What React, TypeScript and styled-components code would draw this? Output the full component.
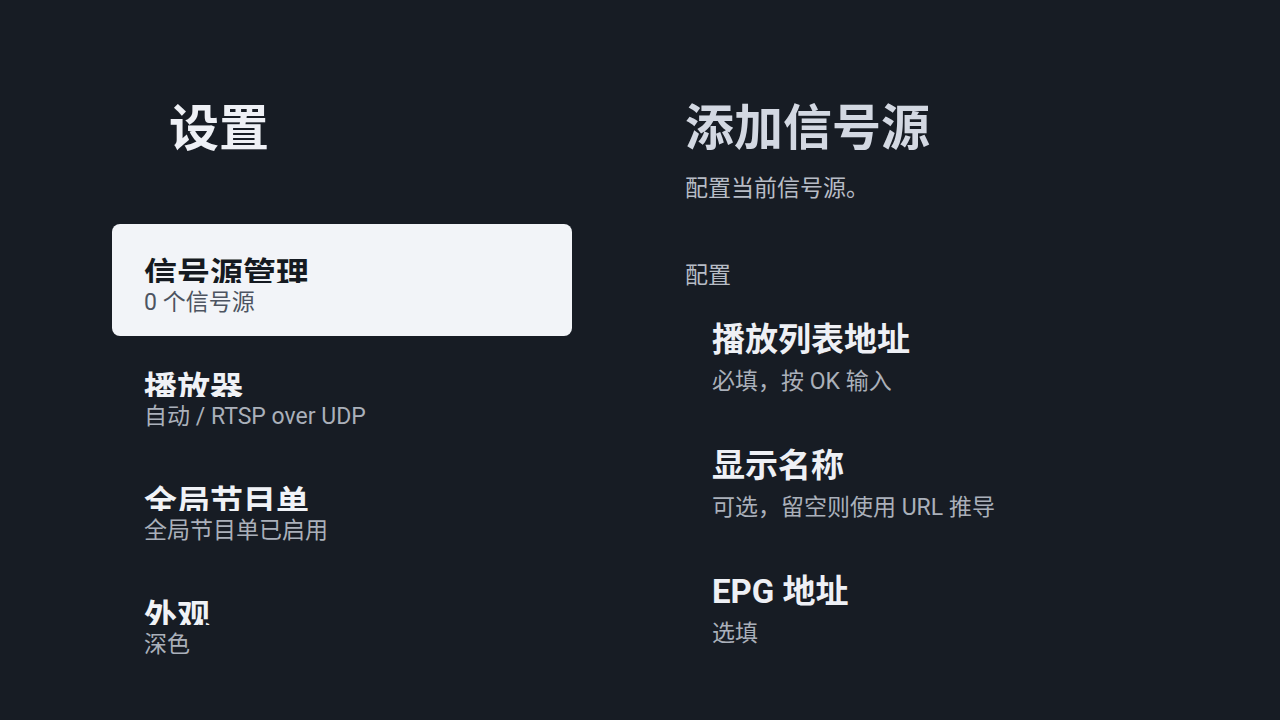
import { createGlobalStyle, styled } from "styled-components";

const GlobalStyle = createGlobalStyle`
  html, body {
    margin: 0;
    padding: 0;
    background: #171c24;
  }
  body {
    font-family: Roboto, "Noto Sans CJK SC", sans-serif;
    width: 1280px;
    height: 720px;
    overflow: hidden;
  }
`;

type Item = { title: string; subtitle: string };

const menu: Item[] = [
  { title: "信号源管理", subtitle: "0 个信号源" },
  { title: "播放器", subtitle: "自动 / RTSP over UDP" },
  { title: "全局节目单", subtitle: "全局节目单已启用" },
  { title: "外观", subtitle: "深色" },
];

const fields: Item[] = [
  { title: "播放列表地址", subtitle: "必填，按 OK 输入" },
  { title: "显示名称", subtitle: "可选，留空则使用 URL 推导" },
  { title: "EPG 地址", subtitle: "选填" },
];

export default function App() {
  return (
    <>
      <GlobalStyle />
      <Page>
        <Sidebar>
          <PageTitle $indent>设置</PageTitle>
          <Menu>
            {menu.map((item, i) => (
              <MenuItem key={item.title} $focused={i === 0}>
                <MenuTitle>{item.title}</MenuTitle>
                <MenuSub $focused={i === 0}>{item.subtitle}</MenuSub>
              </MenuItem>
            ))}
          </Menu>
        </Sidebar>
        <Detail>
          <PageTitle $dim>添加信号源</PageTitle>
          <Lead>配置当前信号源。</Lead>
          <Section>配置</Section>
          <Fields>
            {fields.map((f) => (
              <Field key={f.title}>
                <FieldTitle>{f.title}</FieldTitle>
                <FieldSub>{f.subtitle}</FieldSub>
              </Field>
            ))}
          </Fields>
        </Detail>
      </Page>
    </>
  );
}

const Page = styled.div`
  display: flex;
  padding: 97px 0 0 112px;
  box-sizing: border-box;
  height: 720px;
`;

const Sidebar = styled.div`
  width: 460px;
  display: flex;
  flex-direction: column;
`;

const PageTitle = styled.h1<{ $indent?: boolean; $dim?: boolean }>`
  margin: 0;
  padding-left: ${(p) => (p.$indent ? "57px" : "0")};
  font-size: ${(p) => (p.$indent ? "50px" : "49px")};
  line-height: 64px;
  font-weight: 700;
  color: ${(p) => (p.$dim ? "#d3d8e2" : "#eef0f5")};
`;

const Menu = styled.div`
  margin-top: 63px;
  display: flex;
  flex-direction: column;
  gap: 2px;
`;

const MenuItem = styled.div<{ $focused?: boolean }>`
  height: 112px;
  box-sizing: border-box;
  padding: 31px 32px 0;
  border-radius: 8px;
  background: ${(p) => (p.$focused ? "#f2f4f8" : "transparent")};
  color: ${(p) => (p.$focused ? "#151a21" : "#f0f2f6")};
`;

const MenuTitle = styled.div`
  font-size: 33px;
  line-height: 40px;
  height: 28px;
  overflow: hidden;
  font-weight: 700;
`;

const MenuSub = styled.div<{ $focused?: boolean }>`
  margin-top: 6px;
  font-size: 23px;
  line-height: 28px;
  color: ${(p) => (p.$focused ? "#4d5461" : "#aab0ba")};
`;

const Detail = styled.div`
  margin-left: 113px;
  display: flex;
  flex-direction: column;
`;

const Lead = styled.div`
  margin-top: 13px;
  font-size: 23px;
  line-height: 30px;
  color: #b7bcc6;
`;

const Section = styled.div`
  margin-top: 57px;
  font-size: 23px;
  line-height: 30px;
  color: #b7bcc6;
`;

const Fields = styled.div`
  margin-top: 27px;
  padding-left: 27px;
  display: flex;
  flex-direction: column;
  gap: 47px;
`;

const Field = styled.div`
  display: flex;
  flex-direction: column;
  gap: 5px;
`;

const FieldTitle = styled.div`
  font-size: 33px;
  line-height: 44px;
  font-weight: 700;
  color: #eef0f5;
`;

const FieldSub = styled.div`
  font-size: 23px;
  line-height: 30px;
  color: #aab0ba;
`;
